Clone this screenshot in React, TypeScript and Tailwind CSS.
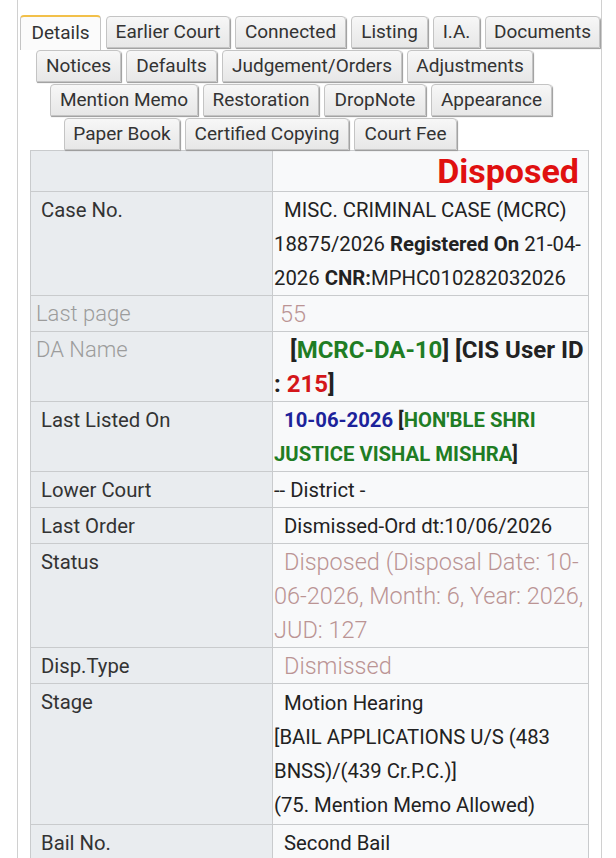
type Tab = { label: string; w: string; active?: boolean };

const tabRows: { cls: string; tabs: Tab[] }[] = [
  {
    cls: "ml-[2px]",
    tabs: [
      { label: "Details", w: "w-[81px]", active: true },
      { label: "Earlier Court", w: "w-[124px]" },
      { label: "Connected", w: "w-[111px]" },
      { label: "Listing", w: "w-[77px]" },
      { label: "I.A.", w: "w-[47px]" },
      { label: "Documents", w: "w-[115px]" },
    ],
  },
  {
    cls: "ml-[18px]",
    tabs: [
      { label: "Notices", w: "w-[85px]" },
      { label: "Defaults", w: "w-[91px]" },
      { label: "Judgement/Orders", w: "w-[180px]" },
      { label: "Adjustments", w: "w-[126px]" },
    ],
  },
  {
    cls: "ml-[32px]",
    tabs: [
      { label: "Mention Memo", w: "w-[148px]" },
      { label: "Restoration", w: "w-[116px]" },
      { label: "DropNote", w: "w-[102px]" },
      { label: "Appearance", w: "w-[121px]" },
    ],
  },
  {
    cls: "ml-[46px]",
    tabs: [
      { label: "Paper Book", w: "w-[116px]" },
      { label: "Certified Copying", w: "w-[164px]" },
      { label: "Court Fee", w: "w-[103px]" },
    ],
  },
];

const TabButton = ({ tab }: { tab: Tab }) => {
  if (tab.active) {
    return (
      <div
        className={`${tab.w} h-[35px] -mt-px -mb-[2px] flex items-start justify-center pt-[2px] rounded-t-[4px] border border-b-0 border-[#c4c4c4] border-t-2 border-t-[#f2c04a] bg-[#fbfbfb] text-[19px] text-[#333]`}
      >
        {tab.label}
      </div>
    );
  }
  return (
    <div
      className={`${tab.w} h-[32px] flex items-center justify-center rounded-t-[4px] border border-[#c4c4c4] bg-gradient-to-b from-[#f7f7f7] to-[#e7e7e7] shadow-[1px_1px_1px_#9a9a9a] text-[19px] text-[#333]`}
    >
      {tab.label}
    </div>
  );
};

const Label = ({ children, light }: { children: React.ReactNode; light?: boolean }) => (
  <td
    className={`w-[242px] align-top border border-[#c9cbcd] bg-[#e9ecef] pt-px leading-[34px] ${
      light ? "pl-[5px] text-[22px] font-light text-[#9c9c9c]" : "pl-[10px] text-[#333]"
    }`}
  >
    {children}
  </td>
);

const Value = ({ children, cls = "indent-[10px]" }: { children: React.ReactNode; cls?: string }) => (
  <td className={`align-top border border-[#c9cbcd] bg-[#f8f9fa] pt-px pl-px pr-0 leading-[34px] text-[#222] ${cls}`}>
    {children}
  </td>
);

const lightValue = "text-[23.5px] font-light text-[#bb9494]";

const App = () => {
  return (
    <div className="min-h-[858px] bg-white font-['Roboto',sans-serif]">
      <div className="ml-[17px] w-[585px] min-h-[858px] border-x border-[#d0d0d0]">
        <div className="flex flex-col gap-[2px] pt-[16px]">
          {tabRows.map((row, i) => (
            <div key={i} className={`flex gap-[5px] items-start ${row.cls}`}>
              {row.tabs.map((t) => (
                <TabButton key={t.label} tab={t} />
              ))}
            </div>
          ))}
        </div>

        <table className="ml-[12px] w-[559px] border-collapse text-[20.3px]">
          <tbody>
            <tr>
              <td className="w-[242px] border border-[#c9cbcd] bg-[#e9ecef] h-[41px]"></td>
              <td className="border border-[#c9cbcd] bg-[#f8f9fa] pr-[9px] text-right text-[34px] font-bold leading-[39px] text-[#e01010]">
                Disposed
              </td>
            </tr>
            <tr>
              <Label>Case No.</Label>
              <Value>
                MISC. CRIMINAL CASE (MCRC) 18875/2026 <b>Registered On</b> 21-04-2026{" "}
                <b>CNR:</b>MPHC010282032026
              </Value>
            </tr>
            <tr>
              <Label light>Last page</Label>
              <Value cls={`indent-[6px] ${lightValue}`}>55</Value>
            </tr>
            <tr>
              <Label light>DA Name</Label>
              <Value cls="indent-[16px] font-bold text-[24px] text-[#2a2a2a]">
                [<span className="text-[#1f7d24]">MCRC-DA-10</span>] [CIS User ID :{" "}
                <span className="text-[#d4161a]">215</span>]
              </Value>
            </tr>
            <tr>
              <Label>Last Listed On</Label>
              <Value cls="indent-[10px] font-bold text-[#2a2a2a]">
                <span className="text-[#1c239a]">10-06-2026</span> [
                <span className="text-[#1f7d24]">HON'BLE SHRI JUSTICE VISHAL MISHRA</span>]
              </Value>
            </tr>
            <tr>
              <Label>Lower Court</Label>
              <Value cls="">-- District -</Value>
            </tr>
            <tr>
              <Label>Last Order</Label>
              <Value>Dismissed-Ord dt:10/06/2026</Value>
            </tr>
            <tr>
              <Label>Status</Label>
              <Value cls={`indent-[10px] ${lightValue}`}>
                Disposed (Disposal Date: 10-06-2026, Month: 6, Year: 2026, JUD: 127
              </Value>
            </tr>
            <tr>
              <Label>Disp.Type</Label>
              <Value cls={`indent-[10px] ${lightValue}`}>Dismissed</Value>
            </tr>
            <tr>
              <Label>Stage</Label>
              <Value cls="pb-[2px]">
                <div className="pl-[10px] pt-px">Motion Hearing</div>
                <div>[BAIL APPLICATIONS U/S (483 BNSS)/(439 Cr.P.C.)]</div>
                <div>(75. Mention Memo Allowed)</div>
              </Value>
            </tr>
            <tr>
              <Label>Bail No.</Label>
              <Value>Second Bail</Value>
            </tr>
          </tbody>
        </table>
      </div>
    </div>
  );
};

export default App;
